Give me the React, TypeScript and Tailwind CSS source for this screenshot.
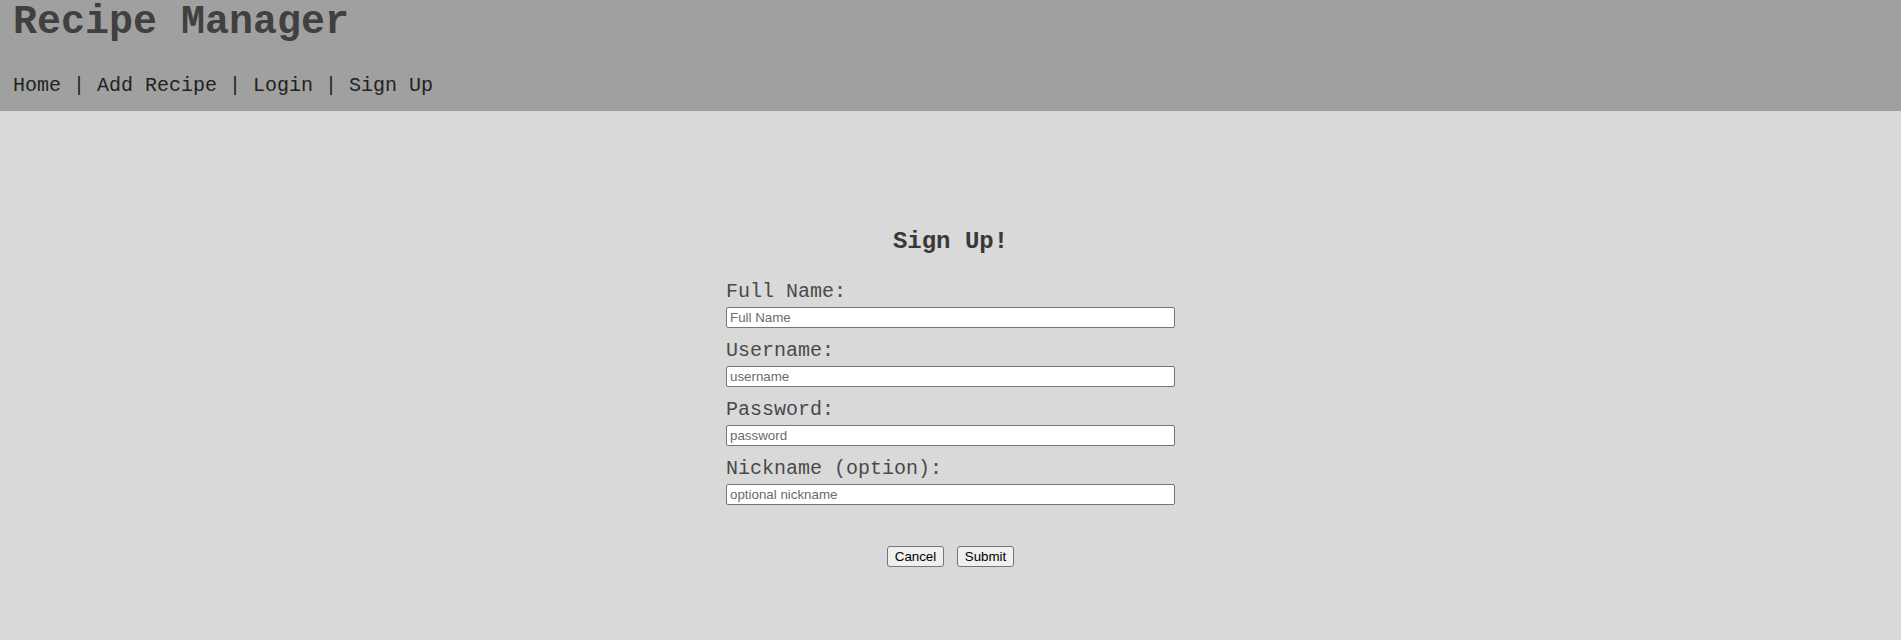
const fields = [
  { label: 'Full Name:', placeholder: 'Full Name', type: 'text' },
  { label: 'Username:', placeholder: 'username', type: 'text' },
  { label: 'Password:', placeholder: 'password', type: 'password' },
  { label: 'Nickname (option):', placeholder: 'optional nickname', type: 'text' },
]

const App = () => {
  return (
    <div className="min-h-screen bg-[#d9d9d9] font-['Courier_New','Nimbus_Mono_PS','FreeMono',Courier,'Liberation_Mono',monospace]">
      {/* Header */}
      <header className="bg-[#a0a0a0] h-[111px] px-[13px]">
        <h1 className="text-[40px] leading-[45px] font-bold text-[#404040]">Recipe Manager</h1>
        <nav className="mt-[29px] text-[20px] leading-[23px] text-[#222]">
          Home | Add Recipe | Login | Sign Up
        </nav>
      </header>

      {/* Sign up form */}
      <main className="pt-[117px] flex flex-col items-center">
        <h2 className="text-[24px] leading-[27px] font-bold text-[#383838]">Sign Up!</h2>
        <form className="w-[449px] mt-[25px]" onSubmit={(e) => e.preventDefault()}>
          {fields.map((f) => (
            <div key={f.label} className="mb-[11px]">
              <label className="block text-[20px] leading-[23px] text-[#4a4a4a] mb-[4px]">{f.label}</label>
              <input
                type={f.type}
                placeholder={f.placeholder}
                className="block w-full h-[21px] bg-white border border-[#767676] rounded-[2px] px-[3px] text-[13.33px] font-['Liberation_Sans',Arial,sans-serif] text-black placeholder:text-[#6b6b6b] outline-none"
              />
            </div>
          ))}
          <div className="flex justify-center gap-[13px] mt-[41px]">
            <button
              type="button"
              className="h-[21px] w-[57px] bg-[#efefef] border border-[#767676] rounded-[3px] text-[13.33px] font-['Liberation_Sans',Arial,sans-serif] text-black"
            >
              Cancel
            </button>
            <button
              type="submit"
              className="h-[21px] w-[57px] bg-[#efefef] border border-[#767676] rounded-[3px] text-[13.33px] font-['Liberation_Sans',Arial,sans-serif] text-black"
            >
              Submit
            </button>
          </div>
        </form>
      </main>
    </div>
  )
}

export default App
